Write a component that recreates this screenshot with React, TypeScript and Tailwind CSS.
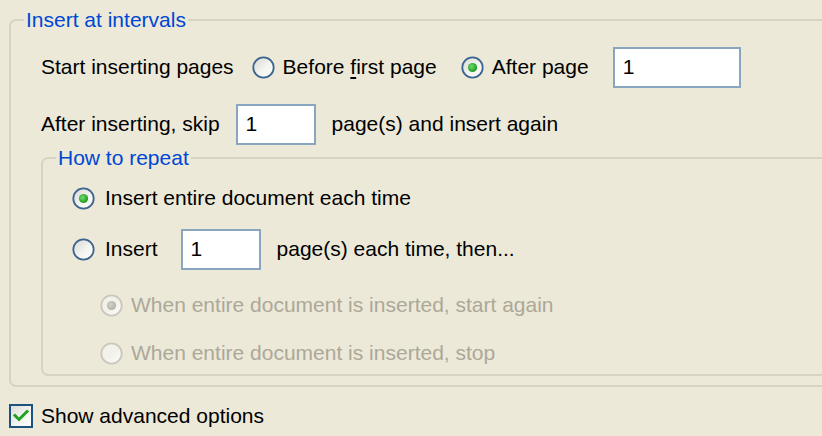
import React from "react";

function Radio({ checked = false, disabled = false }: { checked?: boolean; disabled?: boolean }) {
  const ring = disabled ? "#CAC8BB" : "#3D6591";
  const id = `rg-${checked ? 1 : 0}-${disabled ? 1 : 0}`;
  return (
    <svg width="23" height="23" viewBox="0 0 23 23" className="shrink-0" aria-hidden="true">
      <defs>
        <linearGradient id={id} x1="0" y1="0" x2="1" y2="1">
          <stop offset="0" stopColor={disabled ? "#F2F1EA" : "#D8D8D0"} />
          <stop offset="0.55" stopColor={disabled ? "#F2F1EA" : "#F4F4F0"} />
          <stop offset="1" stopColor="#FFFFFF" />
        </linearGradient>
        <radialGradient id={`${id}-dot`} cx="0.4" cy="0.4" r="0.6">
          <stop offset="0" stopColor={disabled ? "#D4D2C6" : "#6EDC6E"} />
          <stop offset="1" stopColor={disabled ? "#B4B2A6" : "#1E9A1E"} />
        </radialGradient>
      </defs>
      <circle cx="11.5" cy="11.5" r="10.2" fill={`url(#${id})`} stroke={ring} strokeWidth="1.8" />
      {checked && <circle cx="11.5" cy="11.5" r="4.6" fill={`url(#${id}-dot)`} />}
    </svg>
  );
}

function Field({ value, width }: { value: string; width: string }) {
  return (
    <div
      className={`${width} h-[41px] shrink-0 bg-white border-2 border-[#8AA6BF] flex items-center pl-[8px] text-black`}
    >
      {value}
    </div>
  );
}

export default function App() {
  return (
    <div
      className="w-[822px] h-[436px] overflow-hidden bg-[#ECE9D8] text-[21px] leading-[24px] text-black"
      style={{ fontFamily: '"Liberation Sans", Arial, sans-serif' }}
    >
      <fieldset className="ml-[9px] mt-[9px] w-[840px] border-2 border-[#D6D3C3] rounded-[7px] px-0 pb-[9px]">
        <legend className="ml-[13px] px-[2px] text-[#0046D5] leading-[22px]">Insert at intervals</legend>

        <div className="pl-[30px] pt-[15px]">
          <div className="flex items-center h-[42px]">
            <span>Start inserting pages</span>
            <label className="flex items-center gap-[8px] ml-[18px]">
              <Radio />
              <span>
                Before <span className="underline underline-offset-[3px]">f</span>irst page
              </span>
            </label>
            <label className="flex items-center gap-[8px] ml-[24px]">
              <Radio checked />
              <span>After page</span>
            </label>
            <div className="ml-[24px]">
              <Field value="1" width="w-[128px]" />
            </div>
          </div>

          <div className="flex items-center h-[40px] mt-[16px]">
            <span>After inserting, skip</span>
            <div className="ml-[16px]">
              <Field value="1" width="w-[80px]" />
            </div>
            <span className="ml-[16px]">page(s) and insert again</span>
          </div>

          <fieldset className="mt-[3px] border-2 border-[#D6D3C3] rounded-[7px] px-0 pb-[6px]">
            <legend className="ml-[13px] px-[2px] text-[#0046D5] leading-[22px]">How to repeat</legend>

            <div className="pl-[29px]">
              <label className="flex items-center gap-[10px] h-[30px] mt-[14px]">
                <Radio checked />
                <span>Insert entire document each time</span>
              </label>

              <div className="flex items-center h-[40px] mt-[16px]">
                <label className="flex items-center gap-[10px]">
                  <Radio />
                  <span>Insert</span>
                </label>
                <div className="ml-[23px]">
                  <Field value="1" width="w-[80px]" />
                </div>
                <span className="ml-[16px]">page(s) each time, then...</span>
              </div>

              <div className="pl-[28px] text-[#ACA899]">
                <label className="flex items-center gap-[8px] h-[30px] mt-[21px]">
                  <Radio checked disabled />
                  <span>When entire document is inserted, start again</span>
                </label>
                <label className="flex items-center gap-[8px] h-[30px] mt-[18px]">
                  <Radio disabled />
                  <span>When entire document is inserted, stop</span>
                </label>
              </div>
            </div>
          </fieldset>
        </div>
      </fieldset>

      <label className="flex items-center gap-[8px] ml-[9px] mt-[17px] h-[24px]">
        <svg width="24" height="24" viewBox="0 0 24 24" className="shrink-0" aria-hidden="true">
          <defs>
            <linearGradient id="cbg" x1="0" y1="0" x2="1" y2="1">
              <stop offset="0" stopColor="#DCDCD7" />
              <stop offset="0.6" stopColor="#F5F5F1" />
              <stop offset="1" stopColor="#FFFFFF" />
            </linearGradient>
          </defs>
          <rect x="1" y="1" width="22" height="22" fill="url(#cbg)" stroke="#1C5180" strokeWidth="2" />
          <path d="M6 11.5 L10 15.5 L18 7.5" fill="none" stroke="#21A121" strokeWidth="3" strokeLinecap="square" />
        </svg>
        <span>Show advanced options</span>
      </label>
    </div>
  );
}
